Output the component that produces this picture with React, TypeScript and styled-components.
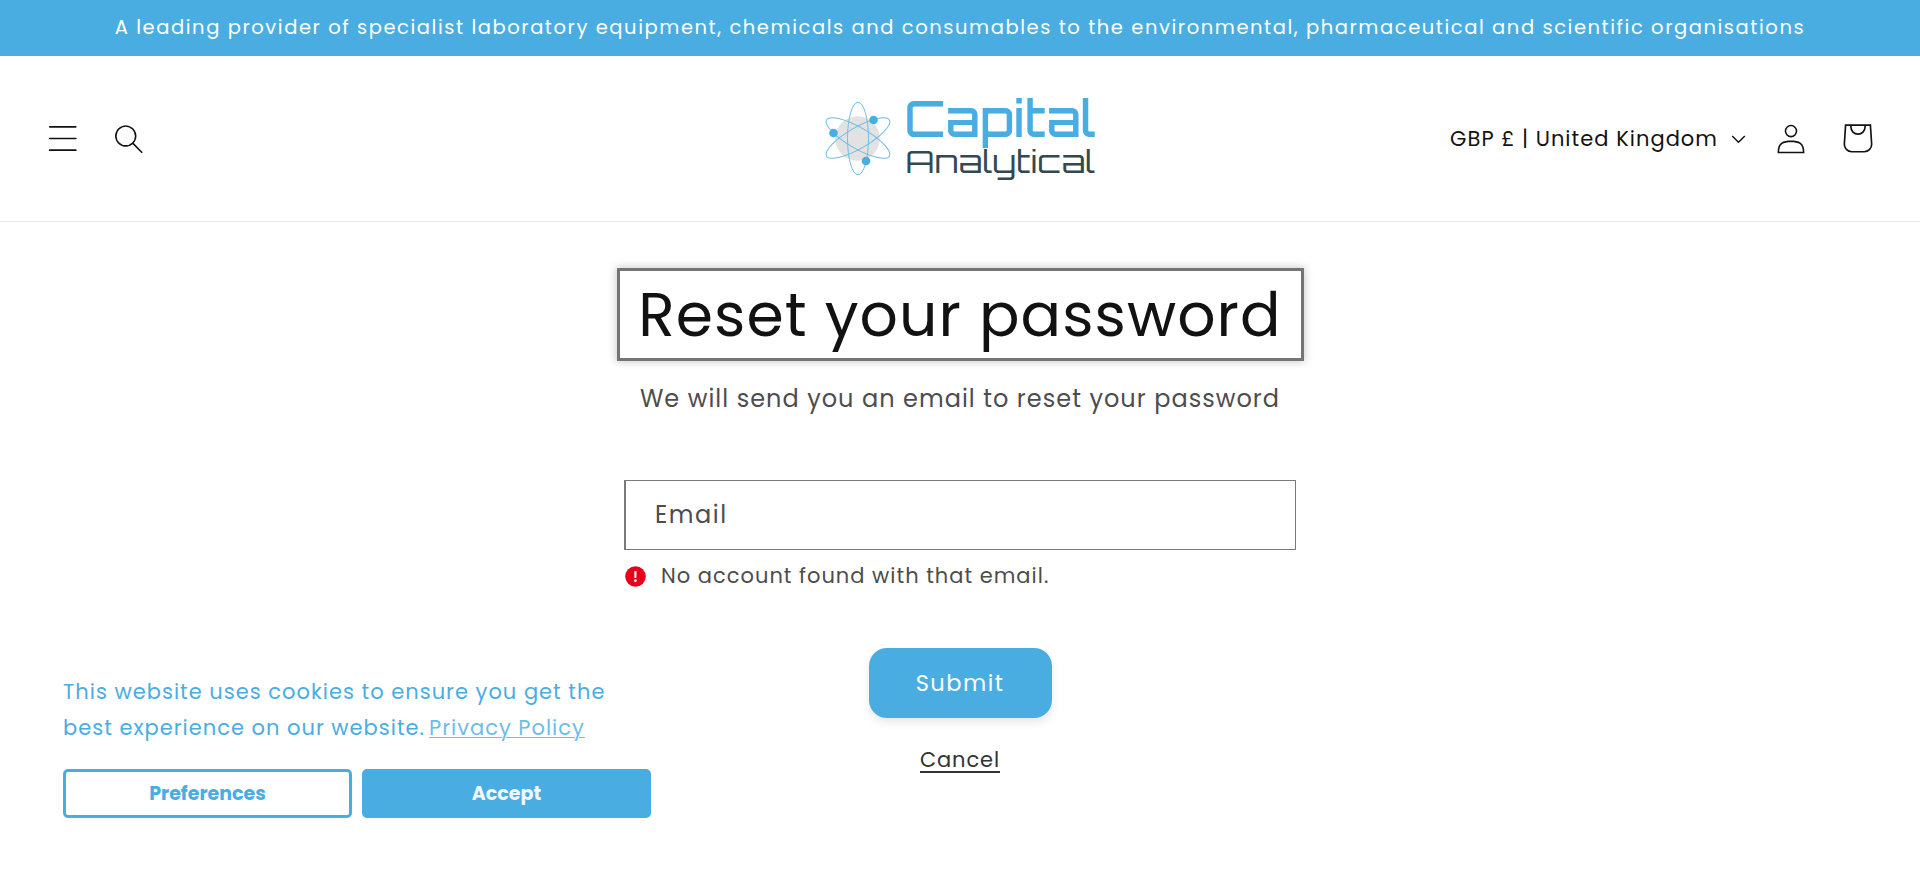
import React from "react";
import styled, { createGlobalStyle } from "styled-components";

const BLUE = "#4aade2";

const GlobalStyle = createGlobalStyle`
  * { box-sizing: border-box; }
  body { margin: 0; background: #fff; color: #121212; font-family: Poppins, Inter, sans-serif; }
  button { font-family: inherit; cursor: pointer; padding: 0; }
`;

const Page = styled.div`
  height: 880px;
  overflow: hidden;
  background: #fff;
`;

const Text = styled.span<{ $size: number; $track?: number; $line?: number }>`
  font-size: ${(p) => p.$size}px;
  letter-spacing: ${(p) => p.$track ?? 0}px;
  line-height: ${(p) => p.$line ?? 30}px;
  white-space: nowrap;
`;

const Announcement = styled.div`
  height: 56px;
  padding-top: 13px;
  display: flex;
  justify-content: center;
  background: ${BLUE};
  color: #fff;
`;

const Header = styled.header`
  height: 166px;
  padding: 0 48px;
  display: grid;
  grid-template-columns: 1fr 280px 1fr;
  align-items: center;
  border-bottom: 1px solid #ebebeb;
`;

const Tools = styled.div<{ $end?: boolean }>`
  display: flex;
  align-items: center;
  justify-content: ${(p) => (p.$end ? "flex-end" : "flex-start")};
  margin-right: ${(p) => (p.$end ? -1 : 0)}px;
`;

const IconButton = styled.button<{ $gap: number }>`
  display: flex;
  margin-left: ${(p) => p.$gap}px;
  border: 0;
  background: none;
  color: #121212;
`;

const Locale = styled.button`
  display: flex;
  align-items: center;
  gap: 13px;
  border: 0;
  background: none;
  color: #121212;
`;

const Logo = styled.a`
  display: flex;
`;

const Main = styled.main`
  display: flex;
  flex-direction: column;
  align-items: center;
  padding-top: 46px;
`;

const TitleBox = styled.h1`
  margin: 0;
  width: 687px;
  height: 93px;
  display: flex;
  justify-content: center;
  align-items: center;
  border: 3px solid #757575;
  box-shadow: 0 0 8px 1px rgba(0, 0, 0, 0.2);
  font-weight: 400;
`;

const Subtitle = styled.p`
  margin: 21px 0 0;
  height: 33px;
  color: #4d4d4d;
`;

const Form = styled.form`
  width: 672px;
  margin-top: 65px;
  display: flex;
  flex-direction: column;
`;

const Field = styled.label`
  height: 70px;
  display: flex;
  align-items: center;
  padding-left: 29px;
  border: 1px solid #7a7a7a;
  border-left-width: 2px;
  color: #4d4d4d;
`;

const ErrorMessage = styled.div`
  display: flex;
  align-items: center;
  height: 30px;
  margin-top: 11px;
  padding-left: 1px;
  gap: 15px;
  color: #4d4d4d;
`;

const Submit = styled.button`
  align-self: center;
  margin: 57px 0 0;
  width: 183px;
  height: 70px;
  border: 0;
  border-radius: 18px;
  background: ${BLUE};
  color: #fff;
  box-shadow: 0 5px 8px rgba(0, 0, 0, 0.09);
`;

const Cancel = styled.a`
  align-self: center;
  margin-top: 28px;
  height: 27px;
  border-bottom: 2px solid #333;
  color: #333;
  display: flex;
  justify-content: center;
  width: 80px;
`;

const CookieBanner = styled.aside`
  position: absolute;
  left: 63px;
  top: 674px;
  width: 588px;
  color: ${BLUE};
`;

const CookieCopy = styled.p`
  margin: 0;
  height: 95px;
  display: flex;
  flex-direction: column;
`;

const CopyLine = styled.span`
  display: flex;
  height: 36px;
`;

const PolicyLink = styled.a`
  margin-left: 4px;
  display: flex;
  text-decoration: underline;
  text-decoration-thickness: 1px;
  text-underline-offset: 2px;
  opacity: 0.8;
`;

const CookieActions = styled.div`
  display: grid;
  grid-template-columns: 1fr 1fr;
  gap: 10px;
`;

const CookieButton = styled.button<{ $filled?: boolean }>`
  height: 49px;
  border: 3px solid ${BLUE};
  border-radius: 5px;
  background: ${(p) => (p.$filled ? BLUE : "#fff")};
  color: ${(p) => (p.$filled ? "#eef8ff" : BLUE)};
  font-weight: 700;
`;

const LogoMark = () => (
  <svg width="280" height="110" viewBox="820 83.5 280 110">
    <circle cx="857.5" cy="138" r="22.3" fill="#e2e2e2" />
    <g fill="none" stroke="#6fbde6" strokeWidth="1">
      <ellipse cx="858" cy="138" rx="10.5" ry="36.3" />
      <ellipse cx="858" cy="137.5" rx="10.5" ry="36.3" transform="rotate(60 858 137.5)" />
      <ellipse cx="858" cy="137.5" rx="10.5" ry="36.3" transform="rotate(-60 858 137.5)" />
    </g>
    <g fill={BLUE}>
      <circle cx="873.5" cy="119.5" r="4.3" />
      <circle cx="833.5" cy="132.5" r="4.3" />
      <circle cx="866" cy="160.5" r="4.3" />
    </g>
    <g fontFamily="Orbitron, 'DejaVu Sans', sans-serif">
      <text x="904.5" y="136.7" fontSize="50" fontWeight="500" fill={BLUE} textLength="191.5" lengthAdjust="spacingAndGlyphs">Capital</text>
      <text x="905.5" y="172.7" fontSize="30" fill="#33494f" textLength="190" lengthAdjust="spacingAndGlyphs">Analytical</text>
    </g>
  </svg>
);

export default function App() {
  return (
    <Page>
      <GlobalStyle />
      <Announcement>
        <Text $size={19.5} $track={1.56}>
          A leading provider of specialist laboratory equipment, chemicals and consumables to the environmental, pharmaceutical and scientific organisations
        </Text>
      </Announcement>
      <Header>
        <Tools>
          <IconButton $gap={0} aria-label="Menu">
            <svg width="30" height="27" viewBox="0 0 18 16" fill="currentColor">
              <path d="M1 .5a.5.5 0 100 1h15.71a.5.5 0 000-1H1zM.5 8a.5.5 0 01.5-.5h15.71a.5.5 0 010 1H1A.5.5 0 01.5 8zm0 7a.5.5 0 01.5-.5h15.71a.5.5 0 010 1H1a.5.5 0 01-.5-.5z" />
            </svg>
          </IconButton>
          <IconButton $gap={36} aria-label="Search">
            <svg width="30" height="30" viewBox="0 0 18 19" fill="currentColor">
              <path fillRule="evenodd" d="M11.03 11.68A5.784 5.784 0 112.85 3.5a5.784 5.784 0 018.18 8.18zm.26 1.12a6.78 6.78 0 11.72-.7l5.4 5.4a.5.5 0 11-.71.7l-5.41-5.4z" />
            </svg>
          </IconButton>
        </Tools>
        <Logo aria-label="Capital Analytical">
          <LogoMark />
        </Logo>
        <Tools $end>
          <Locale>
            <Text $size={21} $track={1.03}>GBP £ | United Kingdom</Text>
            <svg width="15" height="9" viewBox="0 0 15 9" fill="none" stroke="currentColor" strokeWidth="1.5">
              <path d="M1.2 2l6.3 6.2L13.8 2" />
            </svg>
          </Locale>
          <IconButton $gap={30} aria-label="Account">
            <svg width="30" height="30" viewBox="0 0 18 19" fill="currentColor">
              <path fillRule="evenodd" d="M6 4.5a3 3 0 116 0 3 3 0 01-6 0zm3-4a4 4 0 100 8 4 4 0 000-8zm5.58 12.15c1.12.82 1.83 2.24 1.91 4.85H1.51c.08-2.6.79-4.03 1.9-4.85C4.66 11.75 6.5 11.5 9 11.5s4.35.26 5.58 1.15zM9 10.5c-2.5 0-4.65.24-6.17 1.35C1.27 12.98.5 14.93.5 18v.5h17V18c0-3.07-.77-5.02-2.33-6.15-1.52-1.1-3.67-1.35-6.17-1.35z" />
            </svg>
          </IconButton>
          <IconButton $gap={37} aria-label="Cart">
            <svg width="30" height="29" viewBox="11.5 11.6 18 17.4" fill="currentColor">
              <path fillRule="evenodd" d="M15.75 11.8h-3.16l-.77 11.6a5 5 0 004.99 5.34h7.38a5 5 0 004.99-5.33L28.4 11.8zm0 1h-2.22l-.71 10.67a4 4 0 003.99 4.27h7.38a4 4 0 004-4.27l-.72-10.67h-2.22v.63a4.75 4.75 0 11-9.5 0zm8.5 0h-7.5v.63a3.75 3.75 0 107.5 0z" />
            </svg>
          </IconButton>
        </Tools>
      </Header>
      <Main>
        <TitleBox>
          <Text $size={60} $track={1.05} $line={78}>Reset your password</Text>
        </TitleBox>
        <Subtitle>
          <Text $size={24} $track={1.03} $line={33}>We will send you an email to reset your password</Text>
        </Subtitle>
        <Form>
          <Field>
            <Text $size={24} $track={1.5}>Email</Text>
          </Field>
          <ErrorMessage>
            <svg width="21" height="21" viewBox="0 0 21 21">
              <circle cx="10.5" cy="10.5" r="10.3" fill="#eb001b" />
              <path d="M9.2 5.3h2.4l-.3 6.8H9.5z" fill="#fff" />
              <circle cx="10.4" cy="14.7" r="1.35" fill="#fff" />
            </svg>
            <Text $size={21} $track={1}>No account found with that email.</Text>
          </ErrorMessage>
          <Submit type="button">
            <Text $size={22.5} $track={1.5}>Submit</Text>
          </Submit>
          <Cancel>
            <Text $size={21} $track={0.9} $line={28}>Cancel</Text>
          </Cancel>
        </Form>
      </Main>
      <CookieBanner>
        <CookieCopy>
          <CopyLine>
            <Text $size={21} $track={1} $line={36}>This website uses cookies to ensure you get the</Text>
          </CopyLine>
          <CopyLine>
            <Text $size={21} $track={1} $line={36}>best experience on our website.</Text>
            <PolicyLink>
              <Text $size={21} $track={1} $line={36}>Privacy Policy</Text>
            </PolicyLink>
          </CopyLine>
        </CookieCopy>
        <CookieActions>
          <CookieButton>
            <Text $size={19}>Preferences</Text>
          </CookieButton>
          <CookieButton $filled>
            <Text $size={19}>Accept</Text>
          </CookieButton>
        </CookieActions>
      </CookieBanner>
    </Page>
  );
}
